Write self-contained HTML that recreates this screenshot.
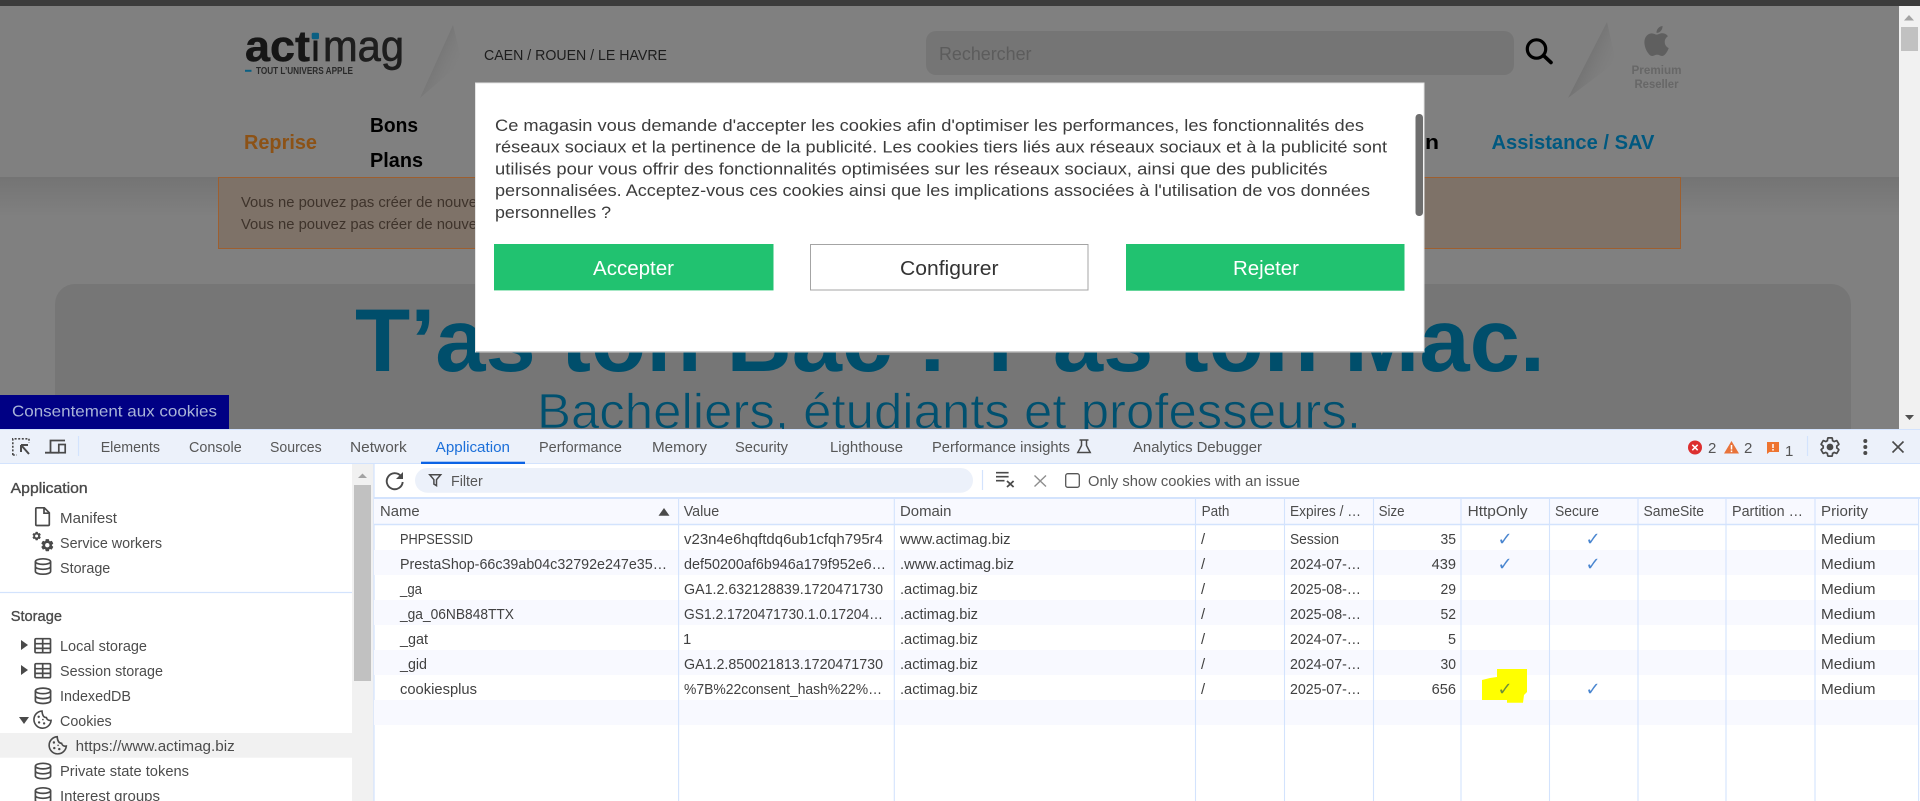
<!DOCTYPE html>
<html lang="fr">
<head>
<meta charset="utf-8">
<title>Actimag cookies</title>
<style>
html,body{margin:0;padding:0;background:#fff;width:1920px;height:801px;overflow:hidden}
svg{display:block}
text{font-family:"Liberation Sans",sans-serif;white-space:pre}
.d{font-size:14.8px;fill:#414141}
.h{font-size:14.8px;fill:#4c4c4c}
.tab{font-size:14.8px;fill:#575757}
.sb{font-size:14.8px;fill:#4c4c4c}
.sh{font-size:14.8px;fill:#4a4a4a;stroke:#4a4a4a;stroke-width:.35px}
.m{font-size:17px;fill:#3c3c3c}
.ck{font-family:"DejaVu Sans",sans-serif;font-size:18px;fill:#4a86d0}
.nav{font-size:20px;font-weight:bold}
</style>
</head>
<body>
<svg xmlns="http://www.w3.org/2000/svg" width="1920" height="801" viewBox="0 0 1920 801">
<defs>
<linearGradient id="s1" gradientUnits="userSpaceOnUse" x1="428" y1="50" x2="462" y2="66"><stop offset="0" stop-color="#5e5e5e" stop-opacity=".55"/><stop offset="1" stop-color="#808080" stop-opacity="0"/></linearGradient>
<linearGradient id="s2" gradientUnits="userSpaceOnUse" x1="1582" y1="50" x2="1618" y2="66"><stop offset="0" stop-color="#5e5e5e" stop-opacity=".55"/><stop offset="1" stop-color="#808080" stop-opacity="0"/></linearGradient>
<linearGradient id="sh" x1="0" y1="0" x2="0" y2="1"><stop offset="0" stop-color="#747474"/><stop offset="1" stop-color="#808080"/></linearGradient>
<path id="gear" d="M19.14 12.94c.04-.3.06-.61.06-.94 0-.32-.02-.64-.07-.94l2.03-1.58c.18-.14.23-.41.12-.61l-1.92-3.32c-.12-.22-.37-.29-.59-.22l-2.39.96c-.5-.38-1.03-.7-1.62-.94l-.36-2.54c-.04-.24-.24-.41-.48-.41h-3.84c-.24 0-.43.17-.47.41l-.36 2.54c-.59.24-1.13.57-1.62.94l-2.39-.96c-.22-.08-.47 0-.59.22L2.74 8.87c-.12.21-.08.47.12.61l2.03 1.58c-.05.3-.09.63-.09.94s.02.64.07.94l-2.03 1.58c-.18.14-.23.41-.12.61l1.92 3.32c.12.22.37.29.59.22l2.39-.96c.5.38 1.03.7 1.62.94l.36 2.54c.05.24.24.41.48.41h3.84c.24 0 .44-.17.47-.41l.36-2.54c.59-.24 1.13-.56 1.62-.94l2.39.96c.22.08.47 0 .59-.22l1.92-3.32c.12-.22.07-.47-.12-.61l-2.01-1.58z"/>
<g id="db" fill="none" stroke="#4a4a4a" stroke-width="1.7"><ellipse cx="9" cy="3.6" rx="7.6" ry="2.8"/><path d="M1.4 3.6v9.8c0 1.6 3.4 2.8 7.6 2.8s7.6-1.2 7.6-2.8V3.6M1.4 8.5c0 1.6 3.4 2.8 7.6 2.8s7.6-1.2 7.6-2.8"/></g>
<g id="tbl" fill="none" stroke="#4a4a4a" stroke-width="1.7"><rect x="1" y="1" width="15.5" height="14" rx="1"/><path d="M1 6h15.5M1 10.7h15.5M8.7 1v14"/></g>
<g id="cookie"><path d="M9.5 1.2A8.6 8.6 0 1 0 18.6 10.6C16 11 14.4 9.6 13.9 7.8 11.4 7.8 9.8 5.8 9.5 1.2z" fill="none" stroke="#4a4a4a" stroke-width="1.6"/><circle cx="6.2" cy="7" r="1.2" fill="#4a4a4a"/><circle cx="6.6" cy="12.6" r="1.2" fill="#4a4a4a"/><circle cx="11.6" cy="13.6" r="1.2" fill="#4a4a4a"/><circle cx="10.4" cy="9.8" r=".8" fill="#4a4a4a"/></g>
</defs>

<!-- browser page -->
<rect width="1920" height="430" fill="#808080"/>
<rect width="1920" height="6" fill="#3c3c3c"/>
<rect y="177" width="1899" height="40" fill="url(#sh)"/>

<!-- logo -->
<text x="245" y="61" font-size="44" font-weight="bold" fill="#161616" stroke="#161616" stroke-width=".5" textLength="65" lengthAdjust="spacingAndGlyphs">act</text>
<text x="311.5" y="61" font-size="44" font-weight="bold" fill="#161616" textLength="8" lengthAdjust="spacingAndGlyphs">i</text>
<rect x="309.5" y="28" width="12" height="12.5" fill="#808080"/>
<rect x="311.7" y="32.7" width="7.3" height="6.6" rx="1.5" fill="#0a5f82"/>
<text x="323" y="61" font-size="44" fill="#1e1e1e" stroke="#1e1e1e" stroke-width=".7" textLength="81" lengthAdjust="spacingAndGlyphs">mag</text>
<rect x="245" y="69.8" width="6.5" height="2" fill="#0a5f82"/>
<text x="256" y="74.2" font-size="10" font-weight="bold" fill="#2a2a2a" textLength="97" lengthAdjust="spacingAndGlyphs">TOUT L’UNIVERS APPLE</text>
<polygon points="453,25 420,98 462,62" fill="url(#s1)"/>
<text x="484" y="60" font-size="15" fill="#1d1d1d" textLength="183" lengthAdjust="spacingAndGlyphs">CAEN / ROUEN / LE HAVRE</text>

<!-- search -->
<rect x="926" y="31" width="588" height="44" rx="10" fill="#757575"/>
<text x="939" y="60" font-size="18" fill="#5c5c5c" textLength="92.5" lengthAdjust="spacingAndGlyphs">Rechercher</text>
<circle cx="1536.5" cy="49" r="9.2" fill="none" stroke="#000" stroke-width="3.2"/>
<path d="M1543.5 55.5L1551 62.5" stroke="#000" stroke-width="3.6" stroke-linecap="round"/>
<polygon points="1607,22 1568,98 1616,62" fill="url(#s2)"/>
<path transform="translate(1638.6 23) scale(1.5)" fill="#5f5f5f" d="M18.71 19.5c-.83 1.24-1.71 2.45-3.05 2.47-1.34.03-1.77-.79-3.29-.79-1.53 0-2 .77-3.27.82-1.31.05-2.3-1.32-3.14-2.53C4.25 17 2.94 12.45 4.7 9.39c.87-1.52 2.43-2.48 4.12-2.51 1.28-.02 2.5.87 3.29.87.78 0 2.26-1.07 3.81-.91.65.03 2.47.26 3.64 1.98-.09.06-2.17 1.28-2.15 3.81.03 3.02 2.65 4.03 2.68 4.04-.03.07-.42 1.44-1.38 2.83M13 3.5c.73-.83 1.94-1.46 2.94-1.5.13 1.17-.34 2.35-1.04 3.19-.69.85-1.83 1.51-2.95 1.42-.15-1.15.41-2.35 1.05-3.11z"/>
<text x="1631.5" y="74" font-size="12" font-weight="bold" fill="#676767" textLength="50" lengthAdjust="spacingAndGlyphs">Premium</text>
<text x="1634.5" y="88" font-size="12" font-weight="bold" fill="#676767" textLength="44" lengthAdjust="spacingAndGlyphs">Reseller</text>

<!-- nav -->
<text x="244" y="149" class="nav" fill="#8c5216" textLength="73" lengthAdjust="spacingAndGlyphs">Reprise</text>
<text x="370" y="132" class="nav" fill="#000" textLength="48" lengthAdjust="spacingAndGlyphs">Bons</text>
<text x="370" y="167" class="nav" fill="#000" textLength="53" lengthAdjust="spacingAndGlyphs">Plans</text>
<text x="1425" y="149" class="nav" fill="#000" textLength="14" lengthAdjust="spacingAndGlyphs">n</text>
<text x="1491.5" y="149" class="nav" fill="#00587f" textLength="163" lengthAdjust="spacingAndGlyphs">Assistance / SAV</text>

<!-- alert -->
<rect x="218.5" y="177.5" width="1462" height="71" fill="#7e7268" stroke="#9d5f30"/>
<text x="241" y="207" font-size="14.5" fill="#3e332b" textLength="236" lengthAdjust="spacingAndGlyphs">Vous ne pouvez pas créer de nouve</text>
<text x="241" y="229" font-size="14.5" fill="#3e332b" textLength="236" lengthAdjust="spacingAndGlyphs">Vous ne pouvez pas créer de nouve</text>

<!-- banner -->
<path d="M55 430V304a20 20 0 0 1 20-20H1831a20 20 0 0 1 20 20V430z" fill="#767676"/>
<text x="355" y="371" font-size="89" font-weight="bold" fill="#004e6b" textLength="1190" lengthAdjust="spacingAndGlyphs">T’as ton Bac ! T’as ton Mac.</text>
<text x="537" y="428" font-size="49" fill="#00506f" stroke="#767676" stroke-width=".8" textLength="824" lengthAdjust="spacingAndGlyphs">Bacheliers, étudiants et professeurs.</text>

<!-- page scrollbar -->
<rect x="1899" y="6" width="21" height="424" fill="#f1f1f1"/>
<polygon points="1909,15 1914,20.5 1904,20.5" fill="#a3a3a3"/>
<rect x="1901" y="27" width="17" height="24" fill="#c1c1c1"/>
<polygon points="1905,415 1914,415 1909.5,420" fill="#505050"/>

<!-- consent tab -->
<rect y="395" width="229" height="35" fill="#000084"/>
<text x="12" y="416.5" font-size="16" fill="#a9b4d8" textLength="205" lengthAdjust="spacingAndGlyphs">Consentement aux cookies</text>

<!-- modal -->
<rect x="475.5" y="83" width="948.5" height="269" fill="#fff" stroke="#e4e4e4"/>
<path d="M476 351.7H1424" stroke="#b5b5b5"/>
<text x="495" y="131" class="m" textLength="869" lengthAdjust="spacingAndGlyphs">Ce magasin vous demande d'accepter les cookies afin d'optimiser les performances, les fonctionnalités des</text>
<text x="495" y="152.7" class="m" textLength="892" lengthAdjust="spacingAndGlyphs">réseaux sociaux et la pertinence de la publicité. Les cookies tiers liés aux réseaux sociaux et à la publicité sont</text>
<text x="495" y="174.5" class="m" textLength="832.5" lengthAdjust="spacingAndGlyphs">utilisés pour vous offrir des fonctionnalités optimisées sur les réseaux sociaux, ainsi que des publicités</text>
<text x="495" y="196.2" class="m" textLength="875" lengthAdjust="spacingAndGlyphs">personnalisées. Acceptez-vous ces cookies ainsi que les implications associées à l'utilisation de vos données</text>
<text x="495" y="218" class="m" textLength="116" lengthAdjust="spacingAndGlyphs">personnelles ?</text>
<rect x="1415.5" y="114" width="7.5" height="102" rx="3.5" fill="#6e6e6e"/>
<rect x="494" y="244" width="279.5" height="46.5" fill="#21c270"/>
<path d="M494 290.5h279.5M1126 290.5h278.5" stroke="#a6e8c5"/>
<text x="593" y="275" font-size="20" fill="#fff" textLength="81" lengthAdjust="spacingAndGlyphs">Accepter</text>
<rect x="810.5" y="244.5" width="277.5" height="45.5" fill="#fff" stroke="#a4a4a4" stroke-width="1"/>
<text x="900" y="275" font-size="20" fill="#333" textLength="98.5" lengthAdjust="spacingAndGlyphs">Configurer</text>
<rect x="1126" y="244" width="278.5" height="46.5" fill="#21c270"/>
<text x="1233" y="275" font-size="20" fill="#fff" textLength="66" lengthAdjust="spacingAndGlyphs">Rejeter</text>

<!-- devtools base -->
<rect y="429" width="1920" height="372" fill="#fff"/>
<rect y="429" width="1920" height="35" fill="#ecf1fa"/>
<path d="M0 429.5H1920M0 463.5H1920" stroke="#d3e3fd"/>

<!-- devtools toolbar icons -->
<g fill="none" stroke="#4a4a4a" stroke-width="1.6">
<path d="M12.8 455v-16.2h16.2" stroke-dasharray="2 1.6"/>
<path d="M12.8 455h4M29 438.8v4" stroke-dasharray="2 1.6"/>
<path d="M21 445h7M21 445v7M21.5 445.5L29 454" stroke-width="2"/>
<path d="M50.5 452v-11.5h14.5M45 452.7h14" stroke-width="1.8"/>
<rect x="58.8" y="444.5" width="6.4" height="8.2" stroke-width="1.7"/>
</g>
<path d="M78.5 436v20M1807.5 436v20" stroke="#d3e3fd" stroke-width="1.2"/>

<!-- tabs -->
<text x="100.7" y="452" class="tab" textLength="59.3" lengthAdjust="spacingAndGlyphs">Elements</text>
<text x="189" y="452" class="tab" textLength="52.7" lengthAdjust="spacingAndGlyphs">Console</text>
<text x="270" y="452" class="tab" textLength="51.7" lengthAdjust="spacingAndGlyphs">Sources</text>
<text x="350" y="452" class="tab" textLength="56.7" lengthAdjust="spacingAndGlyphs">Network</text>
<text x="435.7" y="452" class="tab" style="fill:#1b6fd9" textLength="74.3" lengthAdjust="spacingAndGlyphs">Application</text>
<rect x="421" y="461.7" width="104" height="2.3" fill="#0b63e5"/>
<text x="539" y="452" class="tab" textLength="83" lengthAdjust="spacingAndGlyphs">Performance</text>
<text x="652" y="452" class="tab" textLength="55" lengthAdjust="spacingAndGlyphs">Memory</text>
<text x="735" y="452" class="tab" textLength="53" lengthAdjust="spacingAndGlyphs">Security</text>
<text x="830" y="452" class="tab" textLength="73" lengthAdjust="spacingAndGlyphs">Lighthouse</text>
<text x="932" y="452" class="tab" textLength="138" lengthAdjust="spacingAndGlyphs">Performance insights</text>
<path d="M1079.5 440h9M1081.5 440v5.5l-3.7 7h12.4l-3.7-7v-5.5" fill="none" stroke="#4a4a4a" stroke-width="1.5"/>
<text x="1133" y="452" class="tab" textLength="129" lengthAdjust="spacingAndGlyphs">Analytics Debugger</text>

<!-- status icons -->
<circle cx="1695" cy="447.5" r="7" fill="#dc2f2f"/>
<path d="M1692.3 444.8l5.4 5.4M1697.7 444.8l-5.4 5.4" stroke="#fff" stroke-width="1.5"/>
<text x="1708" y="453" font-size="15" fill="#555">2</text>
<polygon points="1731.5,441 1739,453.5 1724,453.5" fill="#e8733a"/>
<path d="M1731.5 445v4.5M1731.5 450.5v1.6" stroke="#fff" stroke-width="1.5"/>
<text x="1744" y="453" font-size="15" fill="#555">2</text>
<path d="M1767 442h12v10h-9.5l-2.5 2z" fill="#ee7430"/>
<path d="M1773 444v4M1773 449v1.6" stroke="#fff" stroke-width="1.5"/>
<text x="1785" y="456" font-size="15" fill="#555">1</text>
<use href="#gear" transform="translate(1818.6 435.6) scale(.95)" fill="none" stroke="#4a4a4a" stroke-width="1.8"/>
<circle cx="1830" cy="447" r="3.4" fill="#4a4a4a"/>
<circle cx="1865.3" cy="441" r="2" fill="#4a4a4a"/><circle cx="1865.3" cy="447" r="2" fill="#4a4a4a"/><circle cx="1865.3" cy="453" r="2" fill="#4a4a4a"/>
<path d="M1892.5 441.5l11 11M1903.5 441.5l-11 11" stroke="#4a4a4a" stroke-width="1.6"/>

<!-- sidebar -->
<rect x="352" y="464" width="21.5" height="337" fill="#f1f1f1"/>
<rect x="354" y="485" width="17" height="196" fill="#c1c1c1"/>
<polygon points="362.5,473.5 367,478 358,478" fill="#a3a3a3"/>
<path d="M374 464V801" stroke="#d3e3fd" stroke-width="1.2"/>
<path d="M0 592.5H352" stroke="#d3e3fd" stroke-width="1.2"/>

<text x="10.7" y="493" class="sh" textLength="77" lengthAdjust="spacingAndGlyphs">Application</text>
<path d="M36.8 507.8h7.5l5 5v11.7a1 1 0 0 1-1 1H36.8a1 1 0 0 1-1-1v-15.7a1 1 0 0 1 1-1zM44 508v5.2h5" fill="none" stroke="#4a4a4a" stroke-width="1.7"/>
<text x="60" y="523" class="sb" textLength="57" lengthAdjust="spacingAndGlyphs">Manifest</text>
<use href="#gear" transform="translate(31.6 531) scale(.42)" fill="#4a4a4a" stroke="#4a4a4a"/>
<circle cx="36.6" cy="536" r="1.5" fill="#fff"/>
<use href="#gear" transform="translate(40.1 538) scale(.6)" fill="#4a4a4a" stroke="#4a4a4a"/>
<circle cx="47.3" cy="545.2" r="2.2" fill="#fff"/>
<text x="60" y="548" class="sb" textLength="102" lengthAdjust="spacingAndGlyphs">Service workers</text>
<use href="#db" x="34" y="558"/>
<text x="60" y="573" class="sb" textLength="50.3" lengthAdjust="spacingAndGlyphs">Storage</text>

<text x="10.7" y="621" class="sh" textLength="51.3" lengthAdjust="spacingAndGlyphs">Storage</text>
<polygon points="21,640 28,645 21,650" fill="#4a4a4a"/>
<use href="#tbl" x="34" y="637.7"/>
<text x="60" y="651" class="sb" textLength="87" lengthAdjust="spacingAndGlyphs">Local storage</text>
<polygon points="21,665 28,670 21,675" fill="#4a4a4a"/>
<use href="#tbl" x="34" y="662.7"/>
<text x="60" y="676" class="sb" textLength="103" lengthAdjust="spacingAndGlyphs">Session storage</text>
<use href="#db" x="34" y="687.3"/>
<text x="60" y="701" class="sb" textLength="71" lengthAdjust="spacingAndGlyphs">IndexedDB</text>
<polygon points="19,717 29,717 24,724" fill="#4a4a4a"/>
<use href="#cookie" x="32.5" y="709.8"/>
<text x="60" y="726" class="sb" textLength="51.7" lengthAdjust="spacingAndGlyphs">Cookies</text>
<rect y="733" width="352" height="24.7" fill="#f1f1f1"/>
<use href="#cookie" x="47.7" y="735.5"/>
<text x="75.7" y="751" class="sb" textLength="159" lengthAdjust="spacingAndGlyphs">https://www.actimag.biz</text>
<use href="#db" x="34" y="762.5"/>
<text x="60" y="776" class="sb" textLength="129" lengthAdjust="spacingAndGlyphs">Private state tokens</text>
<use href="#db" x="34" y="787"/>
<text x="60" y="801" class="sb" textLength="100" lengthAdjust="spacingAndGlyphs">Interest groups</text>

<!-- cookie toolbar -->
<path d="M400.8 476a8 8 0 1 0 1.9 6" fill="none" stroke="#4a4a4a" stroke-width="1.9"/>
<polygon points="403,472 403,479 396,479" fill="#4a4a4a"/>
<rect x="415" y="468" width="558" height="24.7" rx="12.3" fill="#ecf1fa"/>
<path d="M429.7 474.7h11l-4.2 5v6l-2.6-1.6v-4.4z" fill="none" stroke="#4a4a4a" stroke-width="1.5"/>
<text x="451" y="486" class="tab" textLength="31.7" lengthAdjust="spacingAndGlyphs">Filter</text>
<path d="M982.5 470v20" stroke="#d3e3fd" stroke-width="1.2"/>
<path d="M996 472.7h12.6M996 476.7h12.6M996 480.7h8.5" stroke="#4a4a4a" stroke-width="1.6"/>
<path d="M1007 481l6.6 6M1013.6 481l-6.6 6" stroke="#4a4a4a" stroke-width="1.8"/>
<path d="M1034.5 475.5l11.5 11M1046 475.5l-11.5 11" stroke="#8e8e8e" stroke-width="1.4"/>
<rect x="1065.7" y="473.7" width="13.6" height="13.6" rx="2" fill="#fff" stroke="#555" stroke-width="1.3"/>
<text x="1088" y="486" class="tab" textLength="212" lengthAdjust="spacingAndGlyphs">Only show cookies with an issue</text>

<!-- table backgrounds -->
<rect x="374" y="499" width="1544" height="25" fill="#f8f9ff"/>
<rect x="374" y="550" width="1544" height="25" fill="#f8f9ff"/>
<rect x="374" y="600" width="1544" height="25" fill="#f8f9ff"/>
<rect x="374" y="650" width="1544" height="25" fill="#f8f9ff"/>
<rect x="374" y="700" width="1544" height="25" fill="#f8f9ff"/>
<path d="M374 498H1920" stroke="#d3e3fd" stroke-width="2"/>
<path d="M374 524.5H1919" stroke="#d3e3fd" stroke-width="1.4"/>
<path d="M678.6 499V801M894.3 499V801M1195.5 499V801M1284.5 499V801M1373.5 499V801M1461 499V801M1549.5 499V801M1638 499V801M1726 499V801M1815 499V801M1918.6 499V801" stroke="#d3e3fd" stroke-width="1.1"/>

<!-- highlight -->
<polygon points="1497,669 1527,669 1527,692 1524,695 1523,702.7 1507,702.7 1507,700 1482,700 1482,680 1490,678 1497,677" fill="#ffff00"/>

<!-- header -->
<text x="380" y="516" class="h" textLength="39.6" lengthAdjust="spacingAndGlyphs">Name</text>
<polygon points="664,508 669.5,515.7 658.5,515.7" fill="#4a4a4a"/>
<text x="683.7" y="516" class="h" textLength="35.5" lengthAdjust="spacingAndGlyphs">Value</text>
<text x="900" y="516" class="h" textLength="51.4" lengthAdjust="spacingAndGlyphs">Domain</text>
<text x="1201.6" y="516" class="h" textLength="27.8" lengthAdjust="spacingAndGlyphs">Path</text>
<text x="1290" y="516" class="h" textLength="71" lengthAdjust="spacingAndGlyphs">Expires / …</text>
<text x="1378.6" y="516" class="h" textLength="26" lengthAdjust="spacingAndGlyphs">Size</text>
<text x="1467.6" y="516" class="h" textLength="60" lengthAdjust="spacingAndGlyphs">HttpOnly</text>
<text x="1555" y="516" class="h" textLength="44" lengthAdjust="spacingAndGlyphs">Secure</text>
<text x="1643.5" y="516" class="h" textLength="60.5" lengthAdjust="spacingAndGlyphs">SameSite</text>
<text x="1732" y="516" class="h" textLength="71" lengthAdjust="spacingAndGlyphs">Partition …</text>
<text x="1821" y="516" class="h" textLength="47" lengthAdjust="spacingAndGlyphs">Priority</text>

<!-- row 1 -->
<text x="400" y="544" class="d" textLength="73" lengthAdjust="spacingAndGlyphs">PHPSESSID</text>
<text x="684" y="544" class="d" textLength="199" lengthAdjust="spacingAndGlyphs">v23n4e6hqftdq6ub1cfqh795r4</text>
<text x="900" y="544" class="d" textLength="110.6" lengthAdjust="spacingAndGlyphs">www.actimag.biz</text>
<text x="1201" y="544" class="d">/</text>
<text x="1290" y="544" class="d" textLength="49" lengthAdjust="spacingAndGlyphs">Session</text>
<text x="1440.5" y="544" class="d" textLength="15.5" lengthAdjust="spacingAndGlyphs">35</text>
<text x="1497.5" y="545" class="ck">✓</text>
<text x="1585.5" y="545" class="ck">✓</text>
<text x="1821" y="544" class="d" textLength="54.5" lengthAdjust="spacingAndGlyphs">Medium</text>
<!-- row 2 -->
<text x="400" y="569" class="d" textLength="267" lengthAdjust="spacingAndGlyphs">PrestaShop-66c39ab04c32792e247e35…</text>
<text x="684" y="569" class="d" textLength="202" lengthAdjust="spacingAndGlyphs">def50200af6b946a179f952e6…</text>
<text x="900" y="569" class="d" textLength="114" lengthAdjust="spacingAndGlyphs">.www.actimag.biz</text>
<text x="1201" y="569" class="d">/</text>
<text x="1290" y="569" class="d" textLength="71" lengthAdjust="spacingAndGlyphs">2024-07-…</text>
<text x="1431.6" y="569" class="d" textLength="24.4" lengthAdjust="spacingAndGlyphs">439</text>
<text x="1497.5" y="570" class="ck">✓</text>
<text x="1585.5" y="570" class="ck">✓</text>
<text x="1821" y="569" class="d" textLength="54.5" lengthAdjust="spacingAndGlyphs">Medium</text>
<!-- row 3 -->
<text x="400" y="594" class="d" textLength="22" lengthAdjust="spacingAndGlyphs">_ga</text>
<text x="684" y="594" class="d" textLength="199" lengthAdjust="spacingAndGlyphs">GA1.2.632128839.1720471730</text>
<text x="900" y="594" class="d" textLength="78" lengthAdjust="spacingAndGlyphs">.actimag.biz</text>
<text x="1201" y="594" class="d">/</text>
<text x="1290" y="594" class="d" textLength="71" lengthAdjust="spacingAndGlyphs">2025-08-…</text>
<text x="1440.5" y="594" class="d" textLength="15.5" lengthAdjust="spacingAndGlyphs">29</text>
<text x="1821" y="594" class="d" textLength="54.5" lengthAdjust="spacingAndGlyphs">Medium</text>
<!-- row 4 -->
<text x="400" y="619" class="d" textLength="114" lengthAdjust="spacingAndGlyphs">_ga_06NB848TTX</text>
<text x="684" y="619" class="d" textLength="199" lengthAdjust="spacingAndGlyphs">GS1.2.1720471730.1.0.17204…</text>
<text x="900" y="619" class="d" textLength="78" lengthAdjust="spacingAndGlyphs">.actimag.biz</text>
<text x="1201" y="619" class="d">/</text>
<text x="1290" y="619" class="d" textLength="71" lengthAdjust="spacingAndGlyphs">2025-08-…</text>
<text x="1440.5" y="619" class="d" textLength="15.5" lengthAdjust="spacingAndGlyphs">52</text>
<text x="1821" y="619" class="d" textLength="54.5" lengthAdjust="spacingAndGlyphs">Medium</text>
<!-- row 5 -->
<text x="400" y="644" class="d" textLength="28" lengthAdjust="spacingAndGlyphs">_gat</text>
<text x="683" y="644" class="d">1</text>
<text x="900" y="644" class="d" textLength="78" lengthAdjust="spacingAndGlyphs">.actimag.biz</text>
<text x="1201" y="644" class="d">/</text>
<text x="1290" y="644" class="d" textLength="71" lengthAdjust="spacingAndGlyphs">2024-07-…</text>
<text x="1448" y="644" class="d" textLength="8" lengthAdjust="spacingAndGlyphs">5</text>
<text x="1821" y="644" class="d" textLength="54.5" lengthAdjust="spacingAndGlyphs">Medium</text>
<!-- row 6 -->
<text x="400" y="669" class="d" textLength="27" lengthAdjust="spacingAndGlyphs">_gid</text>
<text x="684" y="669" class="d" textLength="199" lengthAdjust="spacingAndGlyphs">GA1.2.850021813.1720471730</text>
<text x="900" y="669" class="d" textLength="78" lengthAdjust="spacingAndGlyphs">.actimag.biz</text>
<text x="1201" y="669" class="d">/</text>
<text x="1290" y="669" class="d" textLength="71" lengthAdjust="spacingAndGlyphs">2024-07-…</text>
<text x="1440.5" y="669" class="d" textLength="15.5" lengthAdjust="spacingAndGlyphs">30</text>
<text x="1821" y="669" class="d" textLength="54.5" lengthAdjust="spacingAndGlyphs">Medium</text>
<!-- row 7 -->
<text x="400" y="694" class="d" textLength="77" lengthAdjust="spacingAndGlyphs">cookiesplus</text>
<text x="684" y="694" class="d" textLength="198" lengthAdjust="spacingAndGlyphs">%7B%22consent_hash%22%…</text>
<text x="900" y="694" class="d" textLength="78" lengthAdjust="spacingAndGlyphs">.actimag.biz</text>
<text x="1201" y="694" class="d">/</text>
<text x="1290" y="694" class="d" textLength="71" lengthAdjust="spacingAndGlyphs">2025-07-…</text>
<text x="1431.6" y="694" class="d" textLength="24.4" lengthAdjust="spacingAndGlyphs">656</text>
<text x="1497.5" y="695" class="ck" style="fill:#6f8f3a">✓</text>
<text x="1585.5" y="695" class="ck">✓</text>
<text x="1821" y="694" class="d" textLength="54.5" lengthAdjust="spacingAndGlyphs">Medium</text>
</svg>
</body>
</html>
